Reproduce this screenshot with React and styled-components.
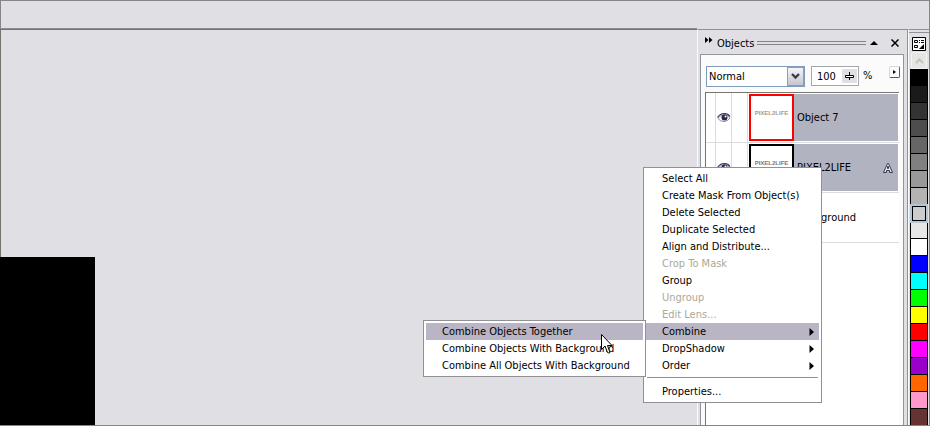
import React, { useState } from "react";
import styled, { createGlobalStyle } from "styled-components";

const GlobalStyle = createGlobalStyle`
  * {
    box-sizing: border-box;
  }

  body {
    margin: 0;
    background: #e0dfe4;
    color: #000;
    font-family: "DejaVu Sans Condensed", Tahoma, sans-serif;
    font-size: 11px;
    line-height: 17px;
  }

  button, input, select {
    font: inherit;
    color: inherit;
    margin: 0;
    padding: 0;
    border: 0;
    border-radius: 0;
    background: none;
  }
`;

const Frame = styled.div`
  position: relative;
  display: flex;
  flex-direction: column;
  height: 100vh;
  overflow: hidden;
  border: solid #85848a;
  border-width: 1px 1px 1px 0;
  background: #e0dfe4;
`;

const PropertyBar = styled.header`
  flex: none;
  height: 27px;
  border-left: 1px solid #85848a;
`;

const Body = styled.main`
  display: flex;
  flex: 1;
  min-height: 0;
`;

const Workspace = styled.section`
  display: flex;
  flex: 1;
  align-items: flex-end;
  border-top: 1px solid #8e8d92;
  box-shadow: inset 1px 1px 0 #73726b;
`;

const Artwork = styled.div`
  width: 95px;
  height: 168px;
  background: #000;
`;

const Docker = styled.aside`
  display: flex;
  flex-direction: column;
  flex: none;
  width: 211px;
  margin-top: 1px;
  padding: 0 3px 0 2px;
  border-top: 1px solid #919097;
  border-left: 1px solid #fbfbfb;
  border-right: 1px solid #919097;
`;

const DockerTitle = styled.header`
  display: flex;
  align-items: center;
  height: 24px;
  padding: 2px 1px 0 5px;
`;

const Title = styled.h1`
  margin: 0 3px 0 4px;
  font-size: 11px;
  font-weight: 400;
`;

const Grip = styled.span`
  flex: 1;
  height: 4px;
  border: solid #85848a;
  border-width: 1px 0;
`;

const IconButton = styled.button`
  display: flex;
  align-items: center;
  justify-content: center;
  width: ${(props) => props.$width || 16}px;
  height: 12px;
`;

const CollapseButton = styled(IconButton)`
  align-items: flex-start;
`;

const CloseButton = styled(IconButton)`
  margin-left: 5px;
`;

const Panel = styled.div`
  display: flex;
  flex-direction: column;
  flex: 1;
  min-height: 0;
  padding: 11px 3px 0 4px;
  border: 1px solid #8f979a;
  border-bottom: 0;
  background: #fbfbfc;
`;

const Options = styled.div`
  display: flex;
  align-items: flex-start;
  height: 26px;
  padding-left: 1px;
`;

const SelectWrap = styled.label`
  position: relative;
  flex: 1;
  height: 21px;
  border: 1px solid #7f9db9;
  background: #fff;
`;

const Select = styled.select`
  display: block;
  width: 100%;
  height: 19px;
  padding-left: 2px;
  appearance: none;
  outline: none;
`;

const SelectArrow = styled.span`
  position: absolute;
  top: 0;
  right: 0;
  display: flex;
  align-items: center;
  justify-content: center;
  width: 17px;
  height: 19px;
  border: 1px solid #9a9aac;
  background: linear-gradient(#f4f4f8, #c5c5d2);
  pointer-events: none;
`;

const Opacity = styled.div`
  display: flex;
  width: 48px;
  height: 20px;
  margin-left: 6px;
  border: 1px solid #a5a5ac;
  background: #fff;
`;

const OpacityInput = styled.input`
  width: 29px;
  padding-left: 5px;
  outline: none;
`;

const Slider = styled.button`
  display: flex;
  align-items: center;
  justify-content: center;
  flex: 1;
  margin: 2px 1px;
  background: #e0dfe4;
`;

const Percent = styled.span`
  width: 30px;
  padding: 1px 0 0 4px;
`;

const Flyout = styled.button`
  display: flex;
  align-items: center;
  justify-content: center;
  width: 11px;
  height: 12px;
  border: 1px solid #d5d8e2;
  border-right-color: #3e5c8c;
  border-bottom-color: #3e5c8c;
  border-radius: 2px;
`;

const ObjectList = styled.ul`
  flex: 1;
  margin: 0 1px 0 0;
  padding: 0;
  list-style: none;
  border: solid #77766f;
  border-width: 1px 0 0 1px;
  background: #fff;
`;

const ObjectRow = styled.li`
  display: flex;
  height: 50px;
  border-bottom: 1px solid #dcdcdf;
`;

const Cell = styled.div`
  display: flex;
  align-items: center;
  justify-content: center;
  width: ${(props) => props.$width}px;
  border-right: 1px solid #dcdcdf;
`;

const Thumb = styled.div`
  width: 45px;
  height: 47px;
  margin: 1px 0 0 1px;
  padding-top: 13px;
  border: 2px solid ${(props) => props.$edge};
  background: #fff;
  color: ${(props) => props.$ink};
  font: 700 6px/8px "Liberation Sans", Arial, sans-serif;
  text-align: center;
`;

const ObjectName = styled.div`
  display: flex;
  align-items: center;
  justify-content: space-between;
  flex: 1;
  margin: 1px 1px 1px 0;
  padding: 0 5px 0 3px;
  background: ${(props) => (props.$selected ? "#b1b3c0" : "#fff")};
`;

const Palette = styled.div`
  display: flex;
  flex-direction: column;
  align-items: center;
  flex: none;
  width: 21px;
  margin-top: 1px;
  padding-top: 3px;
  border-top: 1px solid #919097;
  border-left: 1px solid #fbfbfb;

  &::before {
    content: "";
    align-self: stretch;
    flex: none;
    height: 1px;
    margin: -1px 0 4px;
    background: #919097;
  }
`;

const PaletteMenu = styled.button`
  display: block;
  flex: none;
  width: 14px;
  height: 14px;

  svg {
    display: block;
  }
`;

const PaletteUp = styled.button`
  display: flex;
  align-items: center;
  justify-content: center;
  flex: none;
  width: 16px;
  height: 17px;
  margin-top: 1px;
  border: 1px solid #f4f4f0;
  border-radius: 2px;
  background: #e6e6e4;
`;

const Swatch = styled.button`
  flex: none;
  width: 18px;
  height: 17px;
  border: solid #000;
  border-width: 0 1px 1px;
  background: ${(props) => props.$color};

  ${(props) =>
    props.$picked &&
    `
    position: relative;
    width: 14px;
    height: 15px;
    margin: 1px 0;
    border-width: 1px;
    outline: 2px solid #b4c6d4;
  `}
`;

const Menu = styled.ul`
  position: absolute;
  margin: 0;
  padding: 2px;
  list-style: none;
  border: 1px solid #919097;
  background: #fff;
`;

const ContextMenu = styled(Menu)`
  top: 166px;
  right: 107px;
  width: 179px;
`;

const SubMenu = styled(Menu)`
  top: -3px;
  right: 100%;
  width: 223px;
`;

const MenuItem = styled.li`
  position: relative;
`;

const MenuButton = styled.button`
  display: flex;
  align-items: center;
  justify-content: space-between;
  width: 100%;
  height: 17px;
  padding: 0 5px 0 16px;
  white-space: nowrap;
  background: ${(props) => (props.$active ? "#b9b5c5" : "transparent")};

  &:disabled {
    color: #aca899;
  }
`;

const Separator = styled.li`
  height: 1px;
  margin: 3px 1px 5px;
  background: #919097;
`;

const Cursor = styled.svg`
  position: absolute;
  top: 12px;
  right: 32px;
  pointer-events: none;
`;

const colors = [
  "#000000", "#1a1a1a", "#333333", "#4d4d4d", "#666666", "#808080", "#999999",
  "#b3b3b3", "#cccccc", "#e6e6e6", "#ffffff", "#0000ff", "#00ffff", "#00ff00",
  "#ffff00", "#ff0000", "#ff00ff", "#9900cc", "#ff6600", "#ff99cc", "#663333",
];

const objects = [
  { name: "Object 7", edge: "#ff0000", ink: "#a09c98", art: "PIXEL2LIFE", selected: true },
  { name: "PIXEL2LIFE", edge: "#000", ink: "#77777a", art: "PIXEL2LIFE", selected: true, text: true },
  { name: "Background", edge: "#000", ink: "#000", art: "", selected: false },
];

const combineItems = [
  "Combine Objects Together",
  "Combine Objects With Background",
  "Combine All Objects With Background",
];

const menuItems = [
  { label: "Select All" },
  { label: "Create Mask From Object(s)" },
  { label: "Delete Selected" },
  { label: "Duplicate Selected" },
  { label: "Align and Distribute..." },
  { label: "Crop To Mask", disabled: true },
  { label: "Group" },
  { label: "Ungroup", disabled: true },
  { label: "Edit Lens...", disabled: true },
  { label: "Combine", arrow: true, items: combineItems },
  { label: "DropShadow", arrow: true },
  { label: "Order", arrow: true },
];

const EyeIcon = () => (
  <svg width="14" height="12" viewBox="0 0 14 12">
    <path d="M1 6.5Q3.5 2.5 7.5 2.5Q11 2.5 13 6Q10.5 9.500 7 9.500Q3 9.500 1 6.500Z" fill="#fff" stroke="#8584ae" />
    <path d="M0.5 5.5Q3 1.5 7.5 1.5Q11 1.5 13 4.5" fill="none" stroke="#33314f" strokeWidth="1.2" />
    <circle cx="7.5" cy="5.5" r="3" fill="#29283f" />
    <circle cx="8.5" cy="4.5" r="1" fill="#fff" />
  </svg>
);

const TextIcon = () => (
  <svg width="10" height="12" viewBox="0 0 10 12">
    <path d="M4.500 1.500H5.500L9.500 10.500H6.500V8.500H3.500V10.500H0.500ZM4.500 6.500H5.500V4.500H4.500Z" fill="#e8e8f2" stroke="#3c3b50" />
  </svg>
);

const ArrowRight = () => (
  <svg width="5" height="8" viewBox="0 0 5 8">
    <path d="M0.5 0L5 4L0.5 8Z" />
  </svg>
);

function ObjectsDocker() {
  const [mode, setMode] = useState("Normal");
  const [opacity, setOpacity] = useState("100");

  return (
    <Docker>
      <DockerTitle>
        <CollapseButton aria-label="Collapse docker" $width={8}>
          <svg width="8" height="6" viewBox="0 0 8 6">
            <path d="M0 0L3.5 3L0 6ZM4 0L7.5 3L4 6Z" />
          </svg>
        </CollapseButton>
        <Title>Objects</Title>
        <Grip />
        <IconButton aria-label="Roll up">
          <svg width="8" height="4" viewBox="0 0 8 4">
            <path d="M0 4L4 0L8 4Z" />
          </svg>
        </IconButton>
        <CloseButton aria-label="Close">
          <svg width="8" height="8" viewBox="0 0 8 8">
            <path d="M0.5 0.5L7.5 7.5M7.5 0.5L0.5 7.5" stroke="#000" strokeWidth="1.5" />
          </svg>
        </CloseButton>
      </DockerTitle>
      <Panel>
        <Options>
          <SelectWrap>
            <Select aria-label="Merge mode" value={mode} onChange={(e) => setMode(e.target.value)}>
              <option>Normal</option>
              <option>Multiply</option>
            </Select>
            <SelectArrow>
              <svg width="9" height="7" viewBox="0 0 9 7">
                <path d="M1 1L4.5 4.5L8 1" fill="none" stroke="#3d3d45" strokeWidth="2.4" />
              </svg>
            </SelectArrow>
          </SelectWrap>
          <Opacity>
            <OpacityInput aria-label="Opacity" value={opacity} onChange={(e) => setOpacity(e.target.value)} />
            <Slider aria-label="Opacity slider">
              <svg width="9" height="8" viewBox="0 0 9 8">
                <path d="M4.5 0V8" stroke="#000" />
                <path d="M0.5 3.5H8.5V5.5H0.5Z" fill="#fff" stroke="#000" />
              </svg>
            </Slider>
          </Opacity>
          <Percent>%</Percent>
          <Flyout aria-label="Objects options">
            <svg width="3" height="4" viewBox="0 0 3 4">
              <path d="M0 0L3 2L0 4Z" />
            </svg>
          </Flyout>
        </Options>
        <ObjectList>
          {objects.map((object) => (
            <ObjectRow key={object.name}>
              <Cell $width={10} />
              <Cell $width={16}>
                <EyeIcon />
              </Cell>
              <Cell $width={16} />
              <Thumb $edge={object.edge} $ink={object.ink}>{object.art}</Thumb>
              <ObjectName $selected={object.selected}>
                {object.name}
                {object.text && <TextIcon />}
              </ObjectName>
            </ObjectRow>
          ))}
        </ObjectList>
      </Panel>
    </Docker>
  );
}

function ColorPalette() {
  const [picked, setPicked] = useState("#cccccc");

  return (
    <Palette>
      <PaletteMenu aria-label="Palette options">
        <svg width="14" height="14" viewBox="0 0 14 14">
          <path d="M0.5 0.5H13.5V13.5H0.5Z" fill="#fff" stroke="#000" />
          <path d="M2.5 3.5H5.5V5.5H2.5ZM2.5 8.5H5.5V10.5H2.5ZM7 3.5H8M9 3.5H12M7 5.5H8M9 5.500H12" fill="none" stroke="#000" />
          <path d="M12 7V12H7Z" />
        </svg>
      </PaletteMenu>
      <PaletteUp aria-label="Scroll up">
        <svg width="9" height="6" viewBox="0 0 9 6">
          <path d="M1 5L4.5 1.5L8 5" fill="none" stroke="#c3c2bb" strokeWidth="2" />
        </svg>
      </PaletteUp>
      {colors.map((color) => (
        <Swatch
          key={color}
          aria-label={color}
          $color={color}
          $picked={color === picked}
          onClick={() => setPicked(color)}
        />
      ))}
    </Palette>
  );
}

function ObjectsMenu() {
  const [hovered, setHovered] = useState(combineItems[0]);

  return (
    <ContextMenu>
      {menuItems.map((item) => (
        <MenuItem key={item.label}>
          <MenuButton type="button" disabled={item.disabled} $active={Boolean(item.items)}>
            {item.label}
            {item.arrow && <ArrowRight />}
          </MenuButton>
          {item.items && (
            <SubMenu>
              {item.items.map((label) => (
                <MenuItem key={label}>
                  <MenuButton
                    type="button"
                    $active={label === hovered}
                    onMouseEnter={() => setHovered(label)}
                  >
                    {label}
                  </MenuButton>
                </MenuItem>
              ))}
              <Cursor width="13" height="22" viewBox="0 0 13 22">
                <path
                  d="M1.5 1.5V16.5L5 13L7.5 19.5Q9 20.5 10 19.5L7.5 12.500H12Z"
                  fill="#fff"
                  stroke="#000"
                />
              </Cursor>
            </SubMenu>
          )}
        </MenuItem>
      ))}
      <Separator role="separator" />
      <MenuItem>
        <MenuButton type="button">Properties...</MenuButton>
      </MenuItem>
    </ContextMenu>
  );
}

function App() {
  return (
    <>
      <GlobalStyle />
      <Frame>
        <PropertyBar />
        <Body>
          <Workspace>
            <Artwork />
          </Workspace>
          <ObjectsDocker />
          <ColorPalette />
        </Body>
        <ObjectsMenu />
      </Frame>
    </>
  );
}

export default App;
